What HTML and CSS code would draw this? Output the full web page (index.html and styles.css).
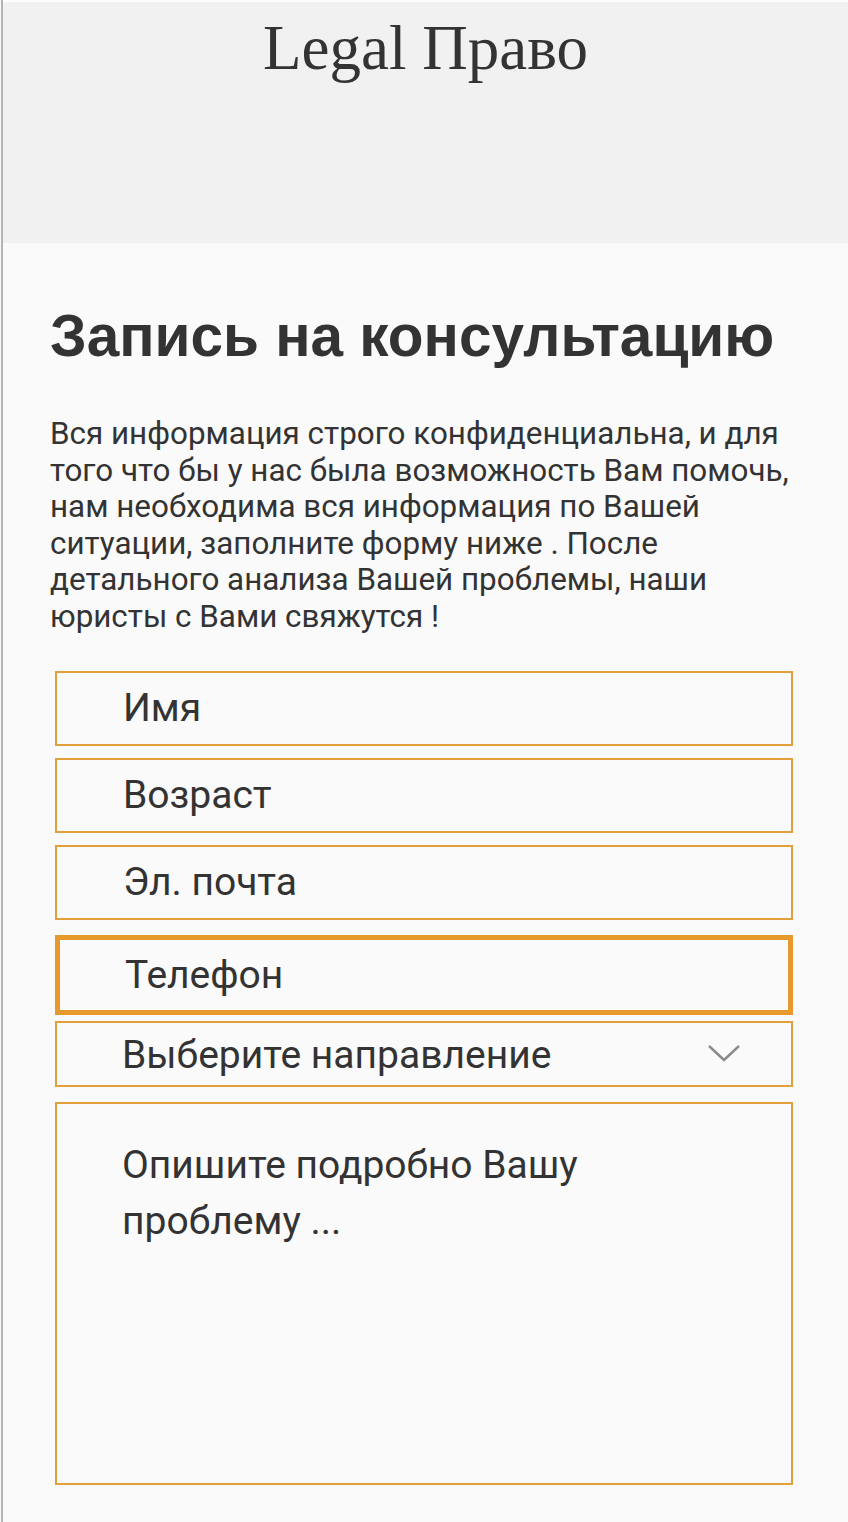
FILE: index.html
```html
<!DOCTYPE html>
<html lang="ru">
<head>
    <meta charset="utf-8">
    <title>Legal Право — Запись на консультацию</title>
    <link rel="stylesheet" href="styles.css">
</head>
<body>
  <div class="page">
    <header class="top">
      <div class="logo">Legal Право</div>
    </header>

    <main class="content">
      <h1>Запись на консультацию</h1>

      <p class="intro">Вся информация строго конфиденциальна, и для того что бы у нас была возможность Вам помочь, нам необходима вся информация по Вашей ситуации, заполните форму ниже . После детального анализа Вашей проблемы, наши юристы с Вами свяжутся !</p>

      <form class="consult">
        <input class="field" type="text" placeholder="Имя">
        <input class="field" type="text" placeholder="Возраст">
        <input class="field" type="email" placeholder="Эл. почта">
        <input class="field field-active" type="tel" placeholder="Телефон">
        <div class="select">
          <span>Выберите направление</span>
          <svg class="chevron" width="32" height="17" viewBox="0 0 32 17">
            <path d="M1 1 L16 15 L31 1" fill="none" stroke="#8a8a8a" stroke-width="2.4"/>
          </svg>
        </div>
        <textarea class="field field-area" placeholder="Опишите подробно Вашу проблему ..."></textarea>
      </form>
    </main>
  </div>
</body>
</html>
```

FILE: styles.css
```css
html, body {
    margin: 0;
    padding: 0;
}

body {
    background-color: #fafafa;
    color: #333;
}

.page {
    min-height: 1522px;
    margin-left: 1px;
    border-left: 2px solid #b4b4b4;
}

.top {
    height: 241px;
    border-top: 2px solid #fdfdfd;
    background-color: #f1f1f1;
    text-align: center;
}

.logo {
    padding-top: 10px;
    font-family: "Liberation Serif", serif;
    font-size: 63px;
    line-height: 72px;
    color: #333;
}

.content {
    padding: 0 40px 0 47px;
}

h1 {
    margin: 58px 0 0;
    font-family: "Liberation Sans", Arial, sans-serif;
    font-weight: bold;
    font-size: 58.5px;
    line-height: 69px;
    color: #333;
}

.intro {
    margin: 46px 0 0;
    font-family: Roboto, sans-serif;
    font-size: 31.4px;
    line-height: 36.6px;
    color: #333;
}

.consult {
    display: flex;
    flex-direction: column;
    margin: 35px 0 0 5px;
    width: 738px;
}

.field,
.select {
    box-sizing: border-box;
    width: 100%;
    margin: 0;
    border: 2px solid #e3a03a;
    border-radius: 0;
    background: #fafafa;
    font-family: Roboto, sans-serif;
    font-size: 39px;
    color: #333;
    outline: none;
}

.field {
    height: 75px;
    padding: 0 0 0 66px;
    margin-bottom: 12px;
}

.field::placeholder {
    color: #333;
    opacity: 1;
}

.field-active {
    height: 80px;
    border: 5px solid #e8992c;
    padding-left: 65px;
    margin-top: 3px;
    margin-bottom: 6px;
}

.select {
    height: 66px;
    display: flex;
    align-items: center;
    justify-content: space-between;
    padding: 0 51px 0 65px;
}

.select span {
    margin-top: 2px;
}

.field-area {
    height: 383px;
    margin-top: 15px;
    padding: 33px 100px 0 65px;
    line-height: 56px;
    resize: none;
}
```
